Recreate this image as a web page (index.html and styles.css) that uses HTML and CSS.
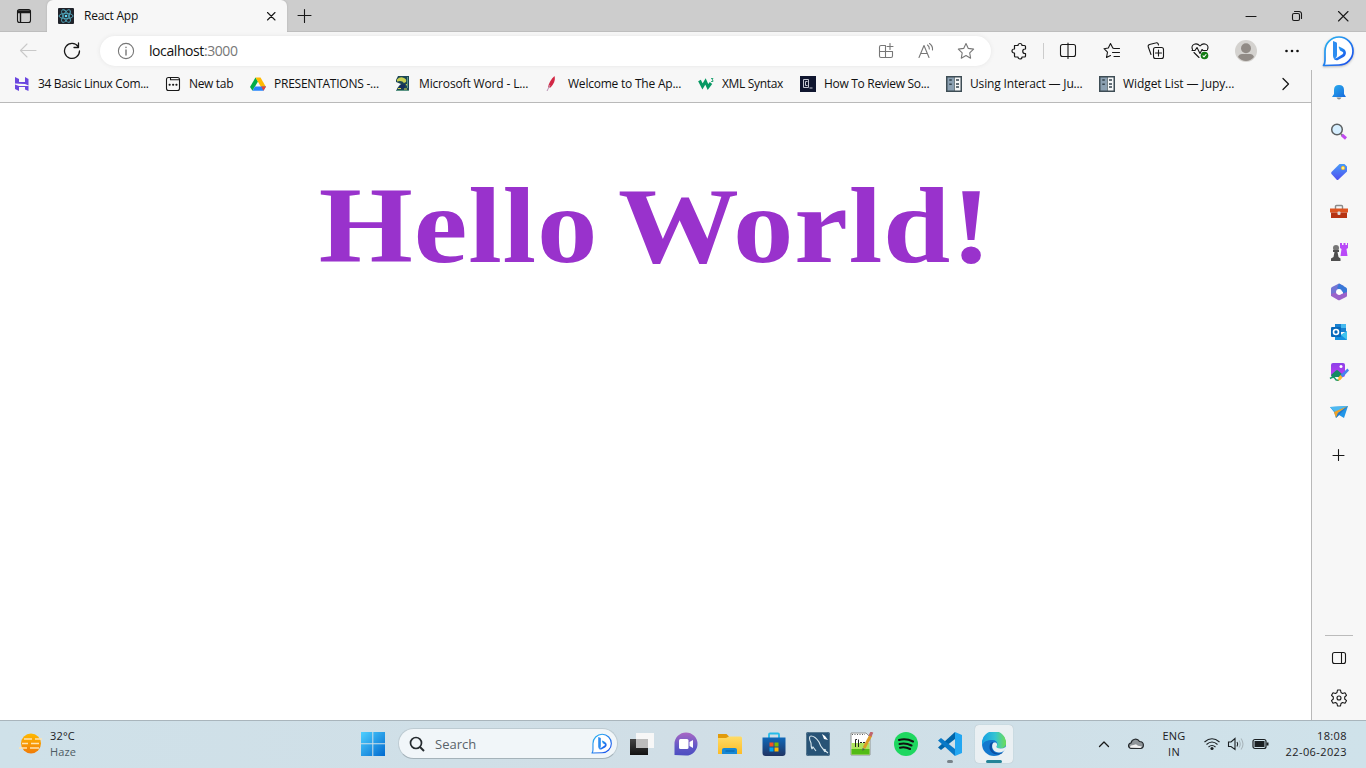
FILE: index.html
```html
<!DOCTYPE html>
<html lang="en">
<head>
<meta charset="utf-8">
<title>React App</title>
<link rel="stylesheet" href="styles.css">
</head>
<body>
<svg width="0" height="0" class="defs" aria-hidden="true">
  <defs>
    <linearGradient id="blue" x1="0" y1="0" x2="1" y2="1"><stop offset="0" stop-color="#28b9f1"/><stop offset="1" stop-color="#1b48ec"/></linearGradient>
    <linearGradient id="bell" x1="0" y1="0" x2="1" y2="1"><stop offset="0" stop-color="#2bb0ee"/><stop offset="1" stop-color="#1668dc"/></linearGradient>
    <linearGradient id="tag" x1="0" y1="0" x2="0" y2="1"><stop offset="0" stop-color="#4a9cf8"/><stop offset="1" stop-color="#4f4ff0"/></linearGradient>
    <linearGradient id="win" x1="0" y1="0" x2="1" y2="1"><stop offset="0" stop-color="#4fd0ff"/><stop offset="1" stop-color="#0069cf"/></linearGradient>
    <linearGradient id="violet" x1="0" y1="0" x2="0" y2="1"><stop offset="0" stop-color="#8c40e8"/><stop offset="1" stop-color="#c13cf4"/></linearGradient>
    <linearGradient id="sun" x1="0" y1="0" x2="0" y2="1"><stop offset="0" stop-color="#ffb900"/><stop offset="1" stop-color="#f07b08"/></linearGradient>
    <linearGradient id="folder" x1="0" y1="0" x2="0" y2="1"><stop offset="0" stop-color="#ffdc67"/><stop offset="1" stop-color="#fdbc27"/></linearGradient>
    <linearGradient id="chat" x1="0" y1="0" x2="0" y2="1"><stop offset="0" stop-color="#a967c4"/><stop offset=".6" stop-color="#6259c7"/><stop offset="1" stop-color="#4c4cc0"/></linearGradient>
    <linearGradient id="dark" x1="0" y1="0" x2="0" y2="1"><stop offset="0" stop-color="#454545"/><stop offset="1" stop-color="#111"/></linearGradient>
    <linearGradient id="store" x1="0" y1="0" x2="0" y2="1"><stop offset="0" stop-color="#0f68b9"/><stop offset="1" stop-color="#203463"/></linearGradient>
    <linearGradient id="edgeTop" x1="0" y1="0" x2="1" y2="0"><stop offset="0" stop-color="#169fe3"/><stop offset=".55" stop-color="#35c4d2"/><stop offset="1" stop-color="#6ddd54"/></linearGradient>
    <symbol id="bing" viewBox="0 0 32 32">
      <path d="M1.500 30.500q1.500-2 1.500-5V16A14 14 0 1 1 17 30Z" fill="#fff" stroke="url(#blue)" stroke-width="1.700" stroke-linejoin="round"/>
      <path d="M11 6l3.200 1.300q.8.300.8 1.200V20q0 3-2 3.500-2 0-2-2.500z" fill="#2d8df0"/><path d="M17 11.500q-.5 0-.3.700l1.300 3.300 2.800 1.500q1.300 1-.3 2.200L15 22.700q-2 1-3.500.5 1 2.600 4 2l6-3.200c3.200-2 3.200-6 .3-8q-2-1.500-4.800-2.500z" fill="url(#blue)"/>
    </symbol>
    <symbol id="jupyter" viewBox="0 0 16 16"><path d="M0 0h16v16H0z" fill="#3e4d55"/><path d="M1.500 1.500H8v13H1.500z" fill="#8ba0b2"/><path d="M8.700 1.500h5.800v13H8.700z" fill="#f5f7f8"/><path d="M3.300 4h2.500M3.300 8.200h2.500M10 4.100h3M10 7.900h3M10 11h3" stroke="#35444d" stroke-width="1.500"/></symbol>
  </defs>
</svg>

<div class="titlebar">
  <span class="tab-menu"><svg width="16" height="16" viewBox="0 0 16 16" class="line"><rect x="1.500" y="1.500" width="13" height="13" rx="2"/><path d="M2 3h12M2 4.500h12M4.500 5v9" stroke-width="1.400"/></svg></span>
  <div class="tab">
    <svg width="16" height="16" viewBox="0 0 16 16"><rect width="16" height="16" rx="1" fill="#20232a"/><g fill="none" stroke="#52a9bf" stroke-width=".9"><ellipse cx="8" cy="8" rx="7" ry="2.700"/><ellipse cx="8" cy="8" rx="7" ry="2.700" transform="rotate(60 8 8)"/><ellipse cx="8" cy="8" rx="7" ry="2.700" transform="rotate(120 8 8)"/></g><circle cx="8" cy="8" r="1.300" fill="#61dafb"/></svg>
    <span class="tab-title">React App</span>
    <svg width="10" height="10" viewBox="0 0 10 10" class="line"><path d="M1.500 1.500l7.500 7.500M9 1.500L1.500 9"/></svg>
  </div>
  <svg width="16" height="16" viewBox="0 0 16 16" class="line new-tab"><path d="M7.500 1.500v13M1 7.500h13"/></svg>
  <div class="window-buttons">
    <span><svg width="12" height="12" viewBox="0 0 12 12" class="line"><path d="M1 6.500h10"/></svg></span>
    <span><svg width="12" height="12" viewBox="0 0 12 12" class="line"><rect x="1.500" y="3.500" width="7" height="7" rx="1.500"/><path d="M3.500 1.500H8A2.500 2.500 0 0 1 10.500 4v4.500"/></svg></span>
    <span><svg width="12" height="12" viewBox="0 0 12 12" class="line"><path d="M1.500 1.500l9.500 9.500M11 1.500L1.500 11"/></svg></span>
  </div>
</div>

<div class="toolbar">
  <span class="nav back"><svg width="18" height="18" viewBox="0 0 18 18" class="line"><path d="M17 8.500H1.500M8 2L1.500 8.500 8 15"/></svg></span>
  <span class="nav"><svg width="18" height="18" viewBox="0 0 18 18" class="line reload"><path d="M15.200 4.700A7.500 7.500 0 1 0 16.500 9M15.500 1v4.500H11"/></svg></span>
  <div class="address">
    <svg width="18" height="18" viewBox="0 0 18 18" class="line grey"><circle cx="9" cy="9" r="7.600"/><path d="M9 8v5M9 5.200v.3" stroke-width="1.400"/></svg>
    <span class="url">localhost<span class="port">:3000</span></span>
    <span class="cell"><svg width="16" height="16" viewBox="0 0 16 16" class="line grey"><path d="M7 2.500H3A1.500 1.500 0 0 0 1.500 4v9A1.500 1.500 0 0 0 3 14.500h10a1.500 1.500 0 0 0 1.500-1.500V8.500H1.500M7.500 2.500v12M12 .500v6M9 3.500h6"/></svg></span>
    <span class="cell"><svg width="18" height="18" viewBox="0 0 18 18" class="line grey"><path d="M2 15.500L7 3.500l5 12M3.700 11.500h6.600M10.500 3q2 1.500 1.800 4M12.500 1.500q3.500 2.500 3 6.500"/></svg></span>
    <span class="cell"><svg width="18" height="18" viewBox="0 0 18 18" class="line grey"><path d="M9 1.500l2.300 4.900 5.300.700-3.900 3.700.900 5.400L9 13.600l-4.700 2.600.900-5.400-3.900-3.700 5.400-.700z"/></svg></span>
  </div>
  <span class="tool puzzle"><svg width="18" height="18" viewBox="0 0 18 18" class="line dark"><path d="M4.500 3.500H8a2 2 0 0 1 4 0h2.500q1 0 1 1V7H15a2 2 0 0 0 0 4.500h.5V14q0 1-1 1H12a2 2 0 0 1-4 0H5.500q-1 0-1-1v-3H4a2 2 0 0 1 0-4h.5z"/></svg></span>
  <span class="divider"></span>
  <span class="tool"><svg width="18" height="18" viewBox="0 0 18 18" class="line"><path d="M7 2.500H3.500a2 2 0 0 0-2 2v8a2 2 0 0 0 2 2H7M11 2.500h3.500a2 2 0 0 1 2 2v8a2 2 0 0 1-2 2H11M7 2.500h4M7 14.500h4M9 1v15.500"/></svg></span>
  <span class="tool"><svg width="18" height="18" viewBox="0 0 18 18" class="line"><path d="M11 6.500L9.800 6 7.500 1.500 5.300 6 1 6.700l3.500 3.500-1 5.300 4-2M11 6.500h5.500M9.500 10.500h7M11 14.500h5.500"/></svg></span>
  <span class="tool"><svg width="18" height="18" viewBox="0 0 18 18" class="line"><rect x="6.500" y="5.500" width="10" height="11" rx="2"/><path d="M11.500 8v6M8.500 11h6M4 12.500L1.300 5A2 2 0 0 1 2.500 2.500l6-1.500c1.700-.5 2.500 0 3 2"/></svg></span>
  <span class="tool"><svg width="20" height="18" viewBox="0 0 20 18" class="line"><path d="M2.500 7.500C.5 3 6-.5 10 4c4-4.500 9.500-1 7.500 3.500M4 10.500L9 15.500M2 8.500h3l2-3 3 6 2-4 1 1h4"/><circle cx="14.500" cy="13.500" r="3.800" fill="#137c14" stroke="none"/><path d="M13 13.800l1 1 2-2.300" stroke="#fff"/></svg></span>
  <span class="tool profile"><svg width="22" height="22" viewBox="0 0 22 22"><circle cx="11" cy="11" r="11" fill="#d4d2cf"/><circle cx="11" cy="8.200" r="5" fill="#918b86"/><path d="M3 17q1-3 4-3h8q3 0 4 3-3.500 4-8 4t-8-4z" fill="#918b86"/></svg></span>
  <span class="tool dots"><svg width="16" height="4" viewBox="0 0 16 4"><g fill="#111"><circle cx="2.500" cy="2" r="1.300"/><circle cx="8" cy="2" r="1.300"/><circle cx="13.500" cy="2" r="1.300"/></g></svg></span>
  <svg class="copilot" width="32" height="32"><use href="#bing"/></svg>
</div>

<div class="content">
  <div class="main">
    <div class="bookmarks">
      <span class="bm b1"><svg width="16" height="16" viewBox="0 0 16 16"><path d="M1 7.500V1l4 2v3h6V1l3.500 2v6.500L11 8zM1 8.500l4 1.500h9.500V15L11 13.500V11H5v4l-4-2z" fill="#6b47df"/></svg><span>34 Basic Linux Com...</span></span>
      <span class="bm b2"><svg width="16" height="16" viewBox="0 0 16 16" class="line"><rect x="1.500" y="1.500" width="13" height="13" rx="2"/><path d="M5.500 1.500v2.300h9"/><path d="M4.500 8.700h.3M8 8.700h.3M11.300 8.700h.3" stroke-width="1.900"/></svg><span>New tab</span></span>
      <span class="bm b3"><svg width="16" height="16" viewBox="0 0 16 16"><path d="M5.500 1.500L0 11l2.500 3.700L8 5.500z" fill="#00ac47"/><path d="M5.500 1.500h5L16 11h-5z" fill="#ffba00"/><path d="M5 10.500h11l-2.500 4.200h-11z" fill="#2684fc"/><path d="M11.200 10.500H16l-2.500 4.200z" fill="#ea4335"/></svg><span>PRESENTATIONS -...</span></span>
      <span class="bm b4"><svg width="16" height="16" viewBox="0 0 16 16"><path d="M3 0h11v15H1l2-4 3-3-5-2V4z" fill="#1c4656"/><path d="M2 3.500Q5 0 9 2q3 1 2 4L9 7Q7 4 2 5.500z" fill="#c9d152"/><path d="M5 9l5-1v4l-4 1H3z" fill="#17305c"/><path d="M3 12.500h3M9 13h3M11 8l1.500 2" stroke="#d5d84d"/><path d="M1 14.500h13M12.500 1v11" stroke="#5c9585"/></svg><span>Microsoft Word - L...</span></span>
      <span class="bm b5"><svg width="16" height="16" viewBox="0 0 16 16"><path d="M10.500 0c1.300 4-1 8.500-4 11.500H4C4.500 7.500 7 3 10.500 0z" fill="#d22744"/><path d="M6 9L3 15" stroke="#b994b5"/></svg><span>Welcome to The Ap...</span></span>
      <span class="bm b6"><svg width="16" height="16" viewBox="0 0 16 16"><path d="M1.500 4.500l3 6 3-5 2.500 5.500L13 7" fill="none" stroke="#059862" stroke-width="3"/><path d="M13 2.500h2L14 4q1.500 0 1 1.500h-2" fill="none" stroke="#059862" stroke-width=".8"/></svg><span>XML Syntax</span></span>
      <span class="bm b7"><svg width="16" height="16" viewBox="0 0 16 16"><path d="M0 0h16v16H0z" fill="#10162f"/><path d="M3.500 3.500h5v8h-5zM7.500 5.500h-2v4h2M9.500 12h3" fill="none" stroke="#c3c6d2"/></svg><span>How To Review So...</span></span>
      <span class="bm b8"><svg width="16" height="16"><use href="#jupyter"/></svg><span>Using Interact — Ju...</span></span>
      <span class="bm b9"><svg width="16" height="16"><use href="#jupyter"/></svg><span>Widget List — Jupy...</span></span>
      <svg width="12" height="14" viewBox="0 0 12 14" class="line more"><path d="M3 1.500L8.500 7 3 12.500"/></svg>
    </div>
    <main class="page"><h1>Hello World!</h1></main>
  </div>

  <aside class="sidebar">
    <span><svg width="18" height="18" viewBox="0 0 18 18"><path d="M2 14l2-3V7q0-5 5-5t5 5v4l2 3z" fill="url(#bell)"/><path d="M6.500 14.500h5q-1 2-2.500 2t-2.500-2z" fill="#8a8c8e"/></svg></span>
    <span><svg width="18" height="18" viewBox="0 0 18 18"><path d="M11 11l1.500 1.500" stroke="#777" stroke-width="2"/><path d="M12 12l4 3.500" stroke="#c04af0" stroke-width="3"/><circle cx="7" cy="6.500" r="5.300" fill="#d6efff" stroke="#5c6062" stroke-width="1.500"/></svg></span>
    <span><svg width="18" height="18" viewBox="0 0 18 18"><path d="M9.500 1h5L17 3.500v5l-8.500 8q-1 1-2 0L1.500 11q-.8-1 0-2z" fill="url(#tag)"/><circle cx="13" cy="5" r="1.600" fill="#fff0a4" stroke="#f5c42b"/></svg></span>
    <span><svg width="18" height="18" viewBox="0 0 18 18"><path d="M5.500 6V3.500q0-1 1-1h5q1 0 1 1V6" fill="none" stroke="#8a8a8a" stroke-width="1.400"/><path d="M0 5.500h18v4H0z" fill="#dd5421"/><path d="M1 9.500h16V15H1z" fill="#b63413"/><rect x="7.500" y="8.500" width="3" height="3.500" rx="1" fill="#ddd"/></svg></span>
    <span><svg width="20" height="20" viewBox="0 0 20 20"><path d="M11 1h2v2h1.500V1h2v2H18V1h1v5l-1.500 1 1 7h-7l1-7L11 6z" fill="#b94af8"/><circle cx="7" cy="6" r="3" fill="#777"/><path d="M4 8h6v2H8.500l1 5 2 1.500V19H2v-2.500L4.500 15l1-5H4z" fill="#4e4e4e"/></svg></span>
    <span><svg width="18" height="18" viewBox="0 0 18 18"><path d="M9 .5L14 3l-4 3-3 1.500-1.500 5L1 13V5.500q0-1 1-1.500z" fill="#7375d5"/><path d="M9 .5L16 4.500q1 .5 1 1.500v6l-4 2v-5L10 7 7 5z" fill="#3978d8"/><path d="M1 11l5-1.500 3 2.500 8-3v3.500q0 1-1 1.500l-6 3q-1 .5-2 0l-6-3.500q-1-.5-1-1.500z" fill="#9b62ca"/><circle cx="9" cy="8.800" r="2.900" fill="#fff"/></svg></span>
    <span><svg width="18" height="18" viewBox="0 0 18 18"><path d="M5 1h11v8H5z" fill="#1780cf"/><path d="M11 1h5v4h-5z" fill="#45b9ef"/><path d="M5 8l6 4 6-4v9H5z" fill="#1490df"/><path d="M11 12l6-4v9z" fill="#40c4ee"/><rect x="1" y="4" width="10" height="10" rx="1" fill="#0669bb"/><circle cx="6" cy="9" r="2.500" fill="none" stroke="#fff" stroke-width="1.600"/></svg></span>
    <span><svg width="20" height="20" viewBox="0 0 20 20"><rect x="2" y="1" width="14" height="14" rx="2" fill="url(#violet)"/><circle cx="12" cy="4.500" r="1.500" fill="#fff"/><path d="M2 13l5-4.500q1-1 2 0L14 13l-2 2H3z" fill="#158b62"/><path d="M1 16.500q4-2.500 5 0t4 1.500" fill="none" stroke="#159a67" stroke-width="1.500"/><path d="M18.500 6.500l1.500 2-6.500 7-2-2.500z" fill="#4684ee"/><path d="M11.500 13l2 2.500q-2 3.500-5 3 1.500-1 .8-3z" fill="#ffb42b"/></svg></span>
    <span><svg width="18" height="18" viewBox="0 0 18 18"><path d="M0 4l18-1-4 12-5-3-3 3-2-6z" fill="#2296e8"/><path d="M0 4l18-1L5 9z" fill="#4eb9f0"/><path d="M18 3L4 9l2 6 2-5z" fill="#f0a126"/><path d="M8 10l10-7-9 9-3 3z" fill="#2478ca"/></svg></span>
    <span class="add"><svg width="14" height="14" viewBox="0 0 14 14" class="line"><path d="M6.500 1.500v11M1 7.500h11"/></svg></span>
    <div class="side-bottom">
      <span><svg width="16" height="14" viewBox="0 0 16 14" class="line"><rect x="1.500" y="1.500" width="13" height="11" rx="2"/><path d="M10.500 1.500v11"/></svg></span>
      <span><svg width="18" height="18" viewBox="0 0 18 18" class="line"><path d="M7 3.500L7.500 1h3l.5 2.500 1.500 1L15 3.800l1.500 2.500L14.700 8v2l1.800 1.700-1.500 2.500-2.500-.7-1.500 1-.5 2.500h-3L7 14.500l-1.500-1-2.500.7-1.500-2.500L3.300 10V8L1.500 6.300 3 3.800l2.500.7z"/><circle cx="9" cy="9" r="2"/></svg></span>
    </div>
  </aside>
</div>

<footer class="taskbar">
  <div class="weather">
    <svg width="24" height="24" viewBox="0 0 24 24"><circle cx="12" cy="11.500" r="10" fill="url(#sun)"/><path d="M5 7h8M16 7h7M3 11.500h6M12 11.500h8M0 16h8M11 16h9" stroke="#ffe4ae" stroke-width="1.500"/></svg>
    <div><div>32°C</div><div class="muted">Haze</div></div>
  </div>
  <span class="app start"><svg width="24" height="24" viewBox="0 0 24 24"><path d="M0 0h11.300v11.300H0zM12.300 0H24v11.300H12.300zM0 12.300h11.300V24H0zM12.300 12.300H24V24H12.300z" fill="url(#win)"/></svg></span>
  <div class="search">
    <svg width="16" height="16" viewBox="0 0 16 16"><circle cx="7" cy="7" r="5.500" fill="none" stroke="#252b2f" stroke-width="1.700"/><path d="M11 11l4 4" stroke="#252b2f" stroke-width="2"/></svg>
    <span>Search</span>
    <svg width="21" height="21"><use href="#bing"/></svg>
  </div>
  <span class="app"><svg width="24" height="24" viewBox="0 0 24 24"><path d="M0 7h18v16H0z" fill="url(#dark)"/><path d="M6 1h18v15H6z" fill="#f7f7f7"/><path d="M6 7h12v9H6z" fill="#bcbcbc"/></svg></span>
  <span class="app"><svg width="24" height="24" viewBox="0 0 24 24"><path d="M.5 23V12A11.500 11.500 0 1 1 12 23.500z" fill="url(#chat)"/><rect x="5" y="7" width="9.500" height="10" rx="1.500" fill="#fff"/><path d="M15.500 10L19 8v8l-3.500-2z" fill="#fff"/></svg></span>
  <span class="app"><svg width="24" height="24" viewBox="0 0 24 24"><path d="M0 2h8.500L11 4.500V9H0z" fill="#e29b0b"/><path d="M0 6h8l3-1.500h11.500Q24 4.500 24 6v16H0z" fill="url(#folder)"/><path d="M4 22v-4q0-2 2-2h11q2 0 2 2v4z" fill="#1788d5"/><path d="M7.500 19h9" stroke="#0867ad" stroke-width="1.200"/></svg></span>
  <span class="app"><svg width="24" height="24" viewBox="0 0 24 24"><path d="M7 6V2.500Q7 1.500 8 1.500h8q1 0 1 1V6" fill="none" stroke="#24bce9" stroke-width="1.800"/><path d="M.5 5.500h23V21q0 3-3 3h-17q-3 0-3-3z" fill="url(#store)"/><path d="M7.500 10.500h4v4h-4z" fill="#f25022"/><path d="M12.500 10.500h4v4h-4z" fill="#7fba00"/><path d="M7.500 15.500h4v4h-4z" fill="#00a4ef"/><path d="M12.500 15.500h4v4h-4z" fill="#ffb900"/></svg></span>
  <span class="app"><svg width="24" height="24" viewBox="0 0 24 24"><rect width="24" height="24" rx="2" fill="#285376"/><rect x=".5" y=".5" width="23" height="23" rx="2" fill="none" stroke="#577990"/><path d="M6 17c-1-2-1-4-1-6C3 7 3 4 5 4c4 0 6 3 8 6 1 3 2 5 4 7l5 4M6 17l1-2 3 4M20 18l-3-1 2 3" fill="none" stroke="#d8e7ee" stroke-width="1.100"/><path d="M16 2l3 2 3 4-4-1z" fill="#fff"/></svg></span>
  <span class="app"><svg width="24" height="24" viewBox="0 0 24 24"><path d="M1 1h15l4 4v18H1z" fill="#fff" stroke="#909492"/><path d="M1.500 11h18v11.500h-18z" fill="#aee35c"/><path d="M1.500 17h18v5.500h-18z" fill="#52bb15"/><path d="M2 2.500h13" stroke="#5b6160" stroke-dasharray="1 1.500"/><path d="M5.500 15V7.500H7M8.500 15V7.500M10 10.500h2M13 10.500h2" stroke="#222" fill="none"/><path d="M21 3L14 16" stroke="#dc9c25" stroke-width="3"/><path d="M22 0l-2 4" stroke="#bf646d" stroke-width="3"/><path d="M12.500 16v3l2.500-2z" fill="#555"/></svg></span>
  <span class="app"><svg width="24" height="24" viewBox="0 0 24 24"><circle cx="12" cy="12" r="12" fill="#1ed760"/><path d="M5 8q7-2 14 1.500M5.500 12q6-1.500 12 1.500M6 15.700q5-1.200 10 1.300" fill="none" stroke="#111" stroke-width="2.100" stroke-linecap="round"/></svg></span>
  <span class="app running"><svg width="24" height="24" viewBox="0 0 24 24"><path d="M17 0v7L3 18l-3-2.500z" fill="#0065a9"/><path d="M0 8.500L3 6l14 11v7z" fill="#0879c7"/><path d="M17 0l7 3v18l-7 3z" fill="#22a7f2"/></svg></span>
  <span class="app active"><svg width="24" height="24" viewBox="0 0 24 24"><circle cx="12" cy="12" r="12" fill="#1378ce"/><path d="M0 11A12 12 0 0 1 24 11c.2 4-3 5.500-6 5.500-2.500 0-4-1-3.500-2 2-2.500.5-6.500-4-6.500C5.500 8 1 9.500 0 14z" fill="url(#edgeTop)"/><path d="M8 12c-2 6 2 10.500 8 10.500 2 0 4-1 5-2-7 3-12-1.500-11-7 .5-2 2-2.500 1-3.500-1 0-2.500 1-3 2z" fill="#0b4ea2"/><path d="M10.500 12c-1.500 4.500 2 9 7 8.500 2.500 0 4.500-1 6.500-4.500l-.5-1q-2 1.500-5 1.500c-2.500 0-4.500-1-4-2 .5-1 1-2 0-3.500-1.500-.7-3.200-.5-4 1z" fill="#e9f0f3"/></svg></span>
  <div class="tray">
    <span class="chev"><svg width="12" height="8" viewBox="0 0 12 8" class="line"><path d="M1.500 6.500L6 2l4.500 4.500" stroke-width="1.300"/></svg></span>
    <svg class="cloud" width="18" height="14" viewBox="0 0 18 14"><path d="M4 11.500C.5 10.500 1 6.500 4 6 5 1.500 10.500 1 12.500 4.500c5 0 5 6.500 1 7z" fill="#8f9599" stroke="#252a2d" stroke-width="1.200"/><path d="M3 10.500q0-2.500 2.500-2.300l3.500-1 2 1.500 4 .8-1.500 1.500z" fill="#f1f1f1"/></svg>
    <div class="lang">ENG<br>IN</div>
    <svg class="wifi" width="18" height="14" viewBox="0 0 18 14"><g fill="none" stroke="#1b2023" stroke-width="1.100"><path d="M1.500 5q7.500-6.500 15 0M3.500 7.500q5.500-5 11 0M5.500 10q3.500-3 7 0"/></g><circle cx="9" cy="11.500" r="1.600" fill="#1b2023"/></svg>
    <svg class="volume" width="18" height="14" viewBox="0 0 18 14" fill="none" stroke="#1b2023" stroke-width="1.100"><path d="M1.500 5H4l4-3.500v11L4 9.500H1.500zM10 5q1.500 2 0 4.500"/><path d="M12 3.500q2.500 3.500 0 7M14 1.500q4 5.500 0 11" stroke="#a9b6bc"/></svg>
    <svg class="battery" width="17" height="12" viewBox="0 0 17 12"><rect x="1" y="1.500" width="13" height="9" rx="2" fill="none" stroke="#1b2023" stroke-width="1.200"/><path d="M2.500 3h10v6h-10zM14.500 4.500h2v3h-2z" fill="#1b2023"/></svg>
    <div class="clock">18:08<br>22-06-2023</div>
  </div>
</footer>
</body>
</html>
```
FILE: styles.css
```css
* { box-sizing: border-box; }
body { margin: 0; width: 1366px; height: 768px; overflow: hidden; background: #fff; color: #111; font: 12px/16px "Open Sans", "Noto Sans", sans-serif; }
svg { display: block; flex: none; }
.defs { position: absolute; }
.line { fill: none; stroke: #181818; stroke-width: 1.1; stroke-linecap: round; stroke-linejoin: round; }
.line.grey { stroke: #777; }
.line.dark { stroke-width: 1.2; }

.titlebar { display: flex; height: 32px; background: #cdcdcd; box-shadow: inset 0 -1px #bebebe; }
.tab-menu { width: 47px; padding: 8px 0 0 16px; }
.tab { display: flex; align-items: center; width: 240px; height: 32px; padding: 0 11px; border-radius: 6px 6px 0 0; background: #f7f7f7; box-shadow: 0 0 2px #aaa; clip-path: inset(0 -3px 0 -3px); }
.tab-title { flex: 1; padding-left: 10px; letter-spacing: -.25px; }
.new-tab { margin: 8px 0 0 10px; }
.window-buttons { display: flex; margin-left: auto; }
.window-buttons span { display: grid; place-items: center; width: 46px; height: 32px; }

.toolbar { display: flex; align-items: center; height: 38px; background: #f7f7f7; }
.nav { display: grid; place-items: center; width: 44px; margin-left: 6px; }
.nav + .nav { margin-left: 0; }
.back .line { stroke: #c9c9c9; }
.reload { stroke-width: 1.3; }
.address { display: flex; align-items: center; width: 891px; height: 30px; margin-left: 6px; padding: 0 5px 0 17px; border-radius: 15px; background: #fff; box-shadow: 0 0 4px #e5e5e5; }
.url { flex: 1; padding-left: 14px; font-size: 14px; letter-spacing: -.42px; }
.port { color: #777; }
.cell { display: grid; place-items: center; width: 40px; }
.tool { display: grid; place-items: center; width: 44px; }
.puzzle { margin-left: 6px; }
.divider { width: 1px; height: 16px; margin: 0 2px; background: #ccc; }
.profile { width: 48px; }
.copilot { margin-left: 8px; filter: drop-shadow(0 1px 1px #bbb); }

.content { display: flex; height: 650px; }
.main { width: 1311px; }
.bookmarks { display: flex; align-items: center; height: 33px; padding: 0 19px 4px 14px; border-bottom: 1px solid #b9b9b9; background: #f7f7f7; }
.bm { display: flex; align-items: center; white-space: nowrap; gap: 8px; letter-spacing: -.33px; }
.b1 { width: 151px; }
.b2 { width: 85px; }
.b3 { width: 145px; letter-spacing: -.24px; }
.b4 { width: 149px; letter-spacing: -.15px; }
.b5 { width: 154px; letter-spacing: -.22px; }
.b6 { width: 102px; }
.b7 { width: 146px; letter-spacing: -.3px; }
.b8 { width: 153px; letter-spacing: -.16px; }
.b9 { width: 160px; letter-spacing: -.08px; }
.more { margin-left: auto; stroke-width: 1.3; }
.page { height: 617px; padding-top: 66px; text-align: center; background: #fff; }
h1 { margin: 0; color: #9932cc; font: bold 107px/114px "Liberation Serif", serif; letter-spacing: .7px; word-spacing: -8px; transform: scaleX(1.13); }

.sidebar { display: flex; flex-direction: column; width: 55px; padding-top: 2px; border-left: 1px solid #b9b9b9; background: #f7f7f7; }
.sidebar span { display: grid; place-items: center; height: 40px; }
.sidebar .add { height: 46px; }
.side-bottom { margin: auto 13px 2px; padding-top: 2px; border-top: 1px solid #bbb; }

.taskbar { display: flex; align-items: center; height: 48px; padding-bottom: 2px; border-top: 1px solid #a9b5bc; background: linear-gradient(90deg, #cfe1e9, #d0dee6 50%, #cfe2ea); color: #1b2023; font-size: 11px; }
.weather { display: flex; align-items: center; gap: 7px; width: 351px; padding-left: 19px; letter-spacing: .15px; }
.muted { color: #4e5c64; }
.app { position: relative; display: grid; place-items: center; width: 38px; height: 38px; margin-right: 6px; border-radius: 4px; }
.start { width: 44px; margin-right: 3px; }
.search { display: flex; align-items: center; width: 220px; height: 31px; margin-right: 5px; padding: 0 5px 0 10px; border: 1px solid #bdcbd2; border-bottom-color: #a5b3ba; border-radius: 16px; background: #f1f6f9; }
.search span { flex: 1; padding-left: 10px; color: #59636a; font-size: 13px; }
.active { background: #eaf0f3; box-shadow: 0 0 1px #9daab0; }
.running::after, .active::after { content: ""; position: absolute; bottom: 0; left: 50%; width: 6px; height: 3px; margin-left: -3px; border-radius: 2px; background: #78838a; }
.active::after { width: 16px; margin-left: -8px; background: #238498; }
.tray { display: flex; align-items: center; margin-left: auto; padding-right: 19px; }
.cloud { margin-left: 17px; }
.lang { width: 38px; margin-left: 10px; text-align: center; letter-spacing: .2px; }
.wifi { margin-left: 10px; }
.volume { margin-left: 6px; }
.battery { margin-left: 7px; }
.clock { width: 78px; text-align: right; white-space: nowrap; letter-spacing: .4px; }
```
